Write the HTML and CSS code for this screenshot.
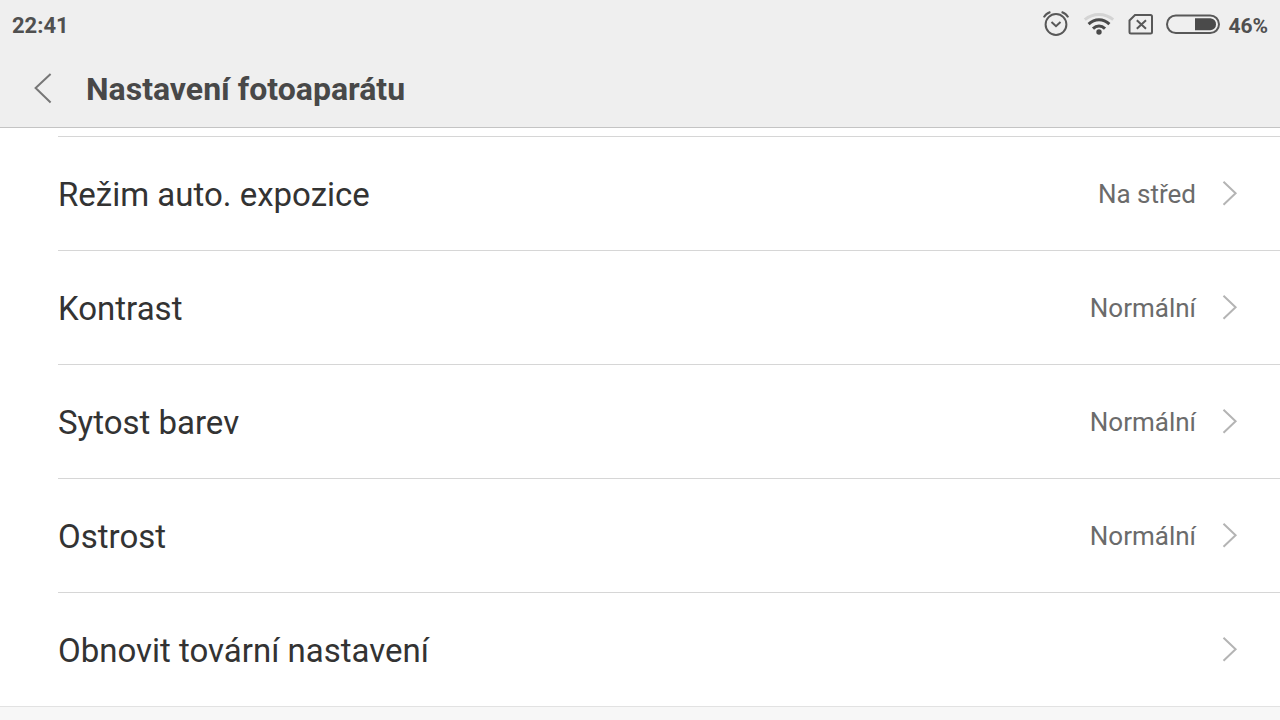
FILE: index.html
```html
<!DOCTYPE html>
<html lang="cs">
<head>
<meta charset="utf-8">
<meta name="viewport" content="width=device-width, initial-scale=1">
<title>Nastavení fotoaparátu</title>
<link rel="stylesheet" href="styles.css">
</head>
<body>
<header class="header">
  <div class="status">
    <time class="clock">22:41</time>
    <div class="indicators">
      <svg class="alarm" width="28" height="28" viewBox="0 0 28 28" fill="none" stroke="#585858" stroke-width="2" aria-hidden="true">
        <circle cx="14" cy="14.5" r="10.4"/>
        <path d="M9.5 12 14 16.2 18.5 12"/>
        <path d="M1.8 7.4Q3.7 3.6 8.4 2M26.2 7.4Q24.3 3.6 19.6 2"/>
      </svg>
      <svg class="wifi" width="32" height="28" viewBox="0 0 32 28" fill="none" stroke="#4a4a4a" stroke-width="3" aria-hidden="true">
        <path d="M1.8 9.7Q8 4.5 16 4.5T30.2 9.7" stroke="#d4d4d4"/>
        <path d="M5.6 14.1Q10.2 9.7 16 9.7T26.4 14.1M10 18.6Q12.7 16 16 16T22 18.6"/>
        <circle cx="16" cy="22" r="2.7" fill="#4a4a4a" stroke="none"/>
      </svg>
      <svg class="sim" width="26" height="22" viewBox="0 0 26 22" fill="none" stroke="#585858" stroke-width="2" aria-hidden="true">
        <path d="M7 2H22.5Q24 2 24 3.5V19Q24 20.5 22.5 20.5H3Q1.5 20.5 1.5 19V7.5Z"/>
        <path d="M8.8 7.2 18 15.8M18 7.2 8.8 15.8"/>
      </svg>
      <svg class="battery" width="54" height="20" viewBox="0 0 54 20" aria-hidden="true">
        <rect x="1" y="1.4" width="52" height="17.6" rx="8.8" fill="none" stroke="#585858" stroke-width="2"/>
        <path d="M29 4.2H44.5Q50 5.2 50 10.2T44.5 16.2H29Z" fill="#4a4a4a"/>
      </svg>
      <span class="percent">46%</span>
    </div>
  </div>
  <div class="titlebar">
    <button class="back" type="button" aria-label="Zpět">
      <svg width="20" height="32" viewBox="0 0 20 32" fill="none" stroke="#777" stroke-width="2" aria-hidden="true"><path d="M18.6 1 3.6 15 18.6 29.5"/></svg>
    </button>
    <h1 class="title">Nastavení fotoaparátu</h1>
  </div>
</header>
<main class="list">
  <button class="row" type="button">
    <span class="label">Režim auto. expozice</span><span class="value">Na střed</span>
    <svg class="chevron" viewBox="0 0 16 26" aria-hidden="true"><path d="M1.5 .8 13.6 12.3 1.5 23.8"/></svg>
  </button>
  <button class="row" type="button">
    <span class="label">Kontrast</span><span class="value">Normální</span>
    <svg class="chevron" viewBox="0 0 16 26" aria-hidden="true"><path d="M1.5 .8 13.6 12.3 1.5 23.8"/></svg>
  </button>
  <button class="row" type="button">
    <span class="label">Sytost barev</span><span class="value">Normální</span>
    <svg class="chevron" viewBox="0 0 16 26" aria-hidden="true"><path d="M1.5 .8 13.6 12.3 1.5 23.8"/></svg>
  </button>
  <button class="row" type="button">
    <span class="label">Ostrost</span><span class="value">Normální</span>
    <svg class="chevron" viewBox="0 0 16 26" aria-hidden="true"><path d="M1.5 .8 13.6 12.3 1.5 23.8"/></svg>
  </button>
  <button class="row" type="button">
    <span class="label">Obnovit tovární nastavení</span>
    <svg class="chevron" viewBox="0 0 16 26" aria-hidden="true"><path d="M1.5 .8 13.6 12.3 1.5 23.8"/></svg>
  </button>
</main>
</body>
</html>
```
FILE: styles.css
```css
* {
  box-sizing: border-box;
}

body {
  margin: 0;
  background: #f7f7f7;
  color: #333;
  font-family: Roboto, "Liberation Sans", sans-serif;
}

button {
  border: 0;
  background: none;
  color: inherit;
  font: inherit;
  text-align: left;
}

.header {
  border-bottom: 1px solid #c4c4c4;
  background: #efefef;
}

.status {
  display: flex;
  align-items: center;
  justify-content: space-between;
  height: 48px;
  padding: 0 12px;
  color: #505050;
  font-size: 21px;
  font-weight: 700;
  line-height: 28px;
}

.clock {
  padding-top: 3px;
  font-size: 22px;
}

.indicators {
  display: flex;
  align-items: center;
}

.wifi {
  margin-left: 13px;
}

.sim {
  margin-left: 13px;
}

.battery {
  margin: 0 8px 0 12px;
}

.percent {
  padding-top: 3px;
}

.titlebar {
  display: flex;
  align-items: center;
  height: 79px;
  padding: 2px 32px 0;
}

.back {
  display: flex;
  width: 54px;
  padding: 0;
}

.title {
  margin: 0;
  color: #484848;
  font-size: 32px;
  font-weight: 700;
  line-height: 40px;
}

.list {
  padding: 8px 0 0 58px;
  border-bottom: 1px solid #e2e2e2;
  background: #fff;
}

.row {
  display: flex;
  align-items: center;
  width: 100%;
  height: 114px;
  padding: 0 42px 0 0;
  border-top: 1px solid #d6d6d6;
}

.label {
  flex: 1;
  padding-top: 2px;
  font-size: 33px;
  line-height: 40px;
}

.value {
  color: #6b6b6b;
  font-size: 26px;
  line-height: 32px;
}

.chevron {
  width: 16px;
  height: 26px;
  margin-left: 26px;
  fill: none;
  stroke: #b4b4b4;
  stroke-width: 2;
}
```
